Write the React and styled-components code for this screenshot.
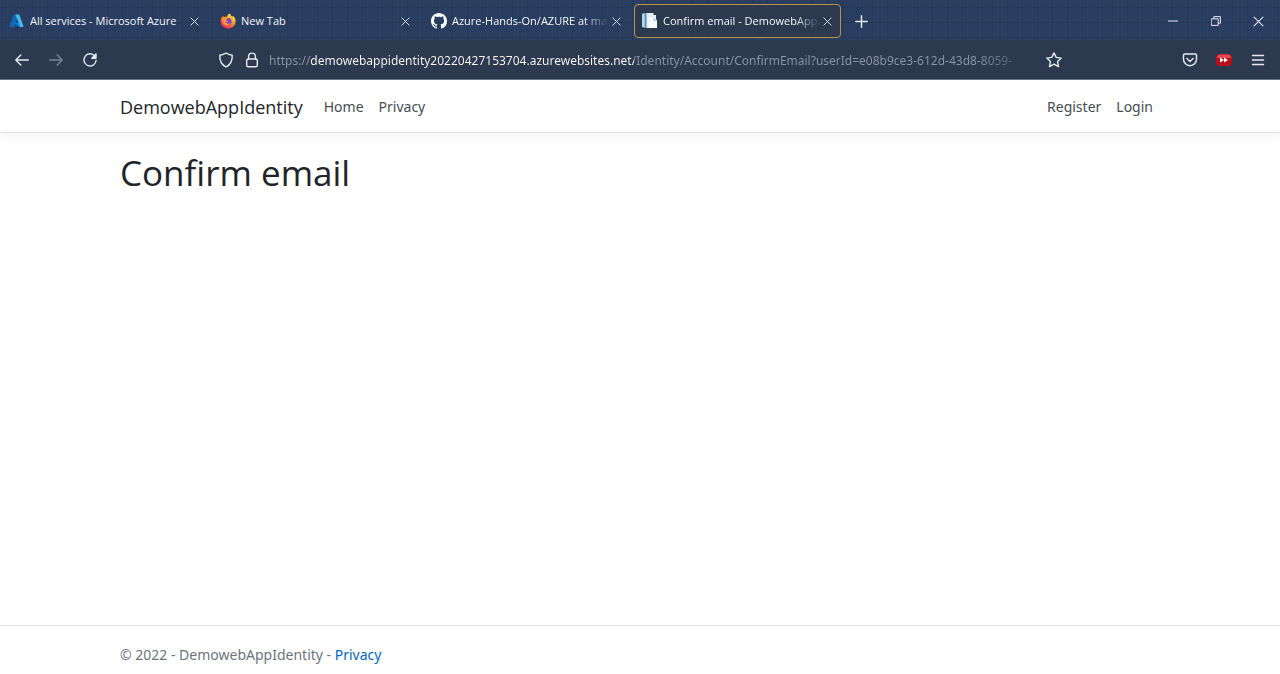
import React from "react";
import styled, { createGlobalStyle, css } from "styled-components";

const GlobalStyle = createGlobalStyle`
  * { box-sizing: border-box; }
  body {
    margin: 0;
    background: #fff;
    color: #212529;
    font-family: "Segoe UI", "Noto Sans", sans-serif;
    font-size: 14px;
  }
  button, input { font: inherit; }
`;

const displayFont = css`
  font-family: "Segoe UI", "Open Sans", sans-serif;
`;

const Shell = styled.div`
  display: flex;
  flex-direction: column;
  min-height: 100vh;
`;

const TabStrip = styled.div`
  display: flex;
  align-items: center;
  height: 40px;
  padding: 2px 0 0 1px;
  color: #f3f6fb;
  background-color: #293e60;
  background-image:
    linear-gradient(90deg, transparent 14px, #253857 14px),
    linear-gradient(transparent 14px, #253857 14px);
  background-size: 15px 15px;
  background-position: 3px 0, 0 8px;
`;

const Tabs = styled.div`
  display: flex;
  flex: 0 1 840px;
  gap: 4px;
  min-width: 0;
`;

const Tab = styled.div`
  display: flex;
  align-items: center;
  flex: 1 1 0;
  min-width: 0;
  height: 34px;
  padding: 0 7px;
  gap: 2px;
  border: 1px solid transparent;
  border-radius: 4px;
  ${(p) => p.$active && css`
    background: #2d394f;
    border-color: #b9954a;
  `}
  > svg { flex: none; margin-right: 3px; }
`;

const TabTitle = styled.span`
  ${displayFont}
  flex: 1;
  min-width: 0;
  overflow: hidden;
  white-space: nowrap;
  font-size: 11px;
  line-height: 18px;
  ${(p) => p.$fade && css`
    mask-image: linear-gradient(90deg, #000 calc(100% - 24px), transparent);
  `}
`;

const IconButton = styled.button`
  display: grid;
  place-items: center;
  flex: none;
  width: ${(p) => p.$w || 34}px;
  height: ${(p) => p.$h || 32}px;
  padding: 0;
  border: 0;
  background: none;
  color: ${(p) => (p.$dim ? "#7b8596" : "#e6eaf1")};
`;

const WindowControls = styled.div`
  display: flex;
  margin-left: auto;
`;

const Toolbar = styled.div`
  display: flex;
  align-items: center;
  justify-content: space-between;
  height: 40px;
  padding: 1px 5px 0;
  background: #2d394f;
  border-bottom: 1px solid #69758a;
`;

const ToolGroup = styled.div`
  display: flex;
  align-items: center;
`;

const AddressBar = styled.div`
  display: flex;
  align-items: center;
  flex: 0 1 856px;
  min-width: 0;
  margin-left: 2px;
`;

const Address = styled.input`
  flex: 1;
  min-width: 0;
  height: 30px;
  padding: 0;
  margin: 0 2px 0 4px;
  border: 0;
  outline: 0;
  font-size: 12px;
  color: transparent;
  background: linear-gradient(90deg, #8c96a6 41px, #fbfbfe 41px, #fbfbfe 365px, #8c96a6 365px, #8c96a6 calc(100% - 60px), transparent);
  background-clip: text;
  -webkit-background-clip: text;
`;

const Container = styled.div`
  display: flex;
  align-items: center;
  width: 100%;
  max-width: 1070px;
  margin: 0 auto;
  padding: 0 15px;
`;

const Header = styled.header`
  display: flex;
  height: 53px;
  padding-top: 2px;
  border-bottom: 1px solid #dee2e6;
  box-shadow: 0 4px 12px rgba(0, 0, 0, 0.05);
`;

const Brand = styled.a`
  ${displayFont}
  margin-right: 14px;
  font-size: 18px;
  line-height: 28px;
  color: #212529;
  text-decoration: none;
`;

const Nav = styled.nav`
  display: flex;
  gap: 1px;
  ${(p) => p.$end && css`margin-left: auto;`}
`;

const NavLink = styled.a`
  padding: 8px 7px;
  line-height: 22px;
  color: #474d52;
  text-decoration: none;
`;

const Main = styled.main`
  flex: 1;
  padding: 15px 0;
`;

const Title = styled.h1`
  ${displayFont}
  margin: 0;
  font-size: 35px;
  line-height: 50px;
  font-weight: 400;
`;

const Footer = styled.footer`
  border-top: 1px solid #dee2e6;
  padding: 18px 0 8px;
  line-height: 22px;
  color: #6c757d;
`;

const FooterLink = styled.a`
  color: #0366bf;
  text-decoration: none;
`;

const Stroke = ({ size = 16, w = 1.4, children }) => (
  <svg width={size} height={size} viewBox="0 0 16 16" fill="none" stroke="currentColor" strokeWidth={w} strokeLinecap="round" strokeLinejoin="round" aria-hidden="true">
    {children}
  </svg>
);

const AzureIcon = () => (
  <svg width="16" height="16" viewBox="0 0 16 16" aria-hidden="true">
    <path d="M5.4 1.5h4.1L5.3 14H1.4c-.8 0-1.1-.5-.9-1.1L4.5 2.200c.1-.4.5-.7.9-.7z" fill="#1268b4" />
    <path d="M5.8 9.400h6l1.500 4.600H10L4.700 10.200c-.4-.4-.2-.8.3-.8z" fill="#0878d2" />
    <path d="M6.300 1.500h3.300c.4 0 .7.300.8.600l4 10.700c.2.700-.2 1.200-.8 1.200h-3.400c.6 0 .9-.5.7-1.100z" fill="#43b9ee" />
  </svg>
);

const FirefoxIcon = () => (
  <svg width="16" height="16" viewBox="0 0 16 16" aria-hidden="true">
    <defs>
      <linearGradient id="fox" x1="0.85" y1="0.05" x2="0.25" y2="1">
        <stop offset="0" stopColor="#fff04a" />
        <stop offset="0.4" stopColor="#ffa02c" />
        <stop offset="0.75" stopColor="#fb4a47" />
        <stop offset="1" stopColor="#e3257c" />
      </linearGradient>
    </defs>
    <path d="M9.600.500c.9.900 1.200 1.800 1.800 2.700 1-.1 1.400.3 1.700.8-.1-.7-.3-1.200-.5-1.500 2 1.300 3 3.500 3 6a7.500 7.200 0 0 1-15 0c0-2.100.700-3.900 1.700-5.200l.3 1.300 1.100-1.700.4 1.200c.9-.4 1.700-.4 2.600 0 .6-1.700 1.400-2.900 2.900-3.600z" fill="url(#fox)" />
    <circle cx="8" cy="8.400" r="3.500" fill="#7542c9" />
    <path d="M2.600 5.500c1.900-1 3.900-.8 5.500.6-1 .1-1.600.5-1.800 1-.3.900.8 1.100 1.700.8-.3 1.500-1.700 1.700-2.600 1.200.8 2 3.600 2.300 5 .5-.7 3-3.800 3.600-5.900 2.100-1.900-1.300-2.700-3.700-1.900-6.200z" fill="#ff962d" />
  </svg>
);

const GithubIcon = () => (
  <svg width="16" height="16" viewBox="0 0 16 16" fill="#fff" aria-hidden="true">
    <path d="M8 0C3.580 0 0 3.580 0 8c0 3.540 2.290 6.530 5.470 7.590.4.070.55-.17.55-.38 0-.19-.01-.82-.01-1.490-2.010.37-2.530-.49-2.690-.94-.09-.23-.48-.94-.82-1.130-.28-.15-.68-.52-.01-.53.63-.01 1.080.58 1.230.82.72 1.210 1.870.87 2.330.66.07-.52.28-.87.51-1.070-1.780-.2-3.640-.89-3.640-3.950 0-.87.31-1.590.82-2.150-.08-.2-.36-1.020.08-2.120 0 0 .67-.21 2.200.82.640-.18 1.320-.27 2-.27s1.360.09 2 .27c1.530-1.040 2.200-.82 2.200-.82.440 1.100.160 1.920.080 2.120.510.560.820 1.270.820 2.150 0 3.070-1.870 3.750-3.650 3.950.290.250.540.730.540 1.480 0 1.070-.010 1.930-.010 2.200 0 .210.150.460.550.380A8.010 8.010 0 0 0 16 8c0-4.420-3.580-8-8-8z" />
  </svg>
);

const ServerIcon = () => (
  <svg width="16" height="16" viewBox="0 0 16 16" aria-hidden="true">
    <path d="M0 .8 4.500 0v15L0 14z" fill="#b7d9ee" />
    <path d="M2.700.4 5 0v15l-2.300-.5z" fill="#4f91b8" />
    <path d="M4.500 0h7v2H14v13H4.500z" fill="#e2edf4" />
    <path d="M6.500 4.500h5L15 7v8H6.500z" fill="#f7fafc" />
    <path d="M11.500 4.500V8H15z" fill="#b7ccd9" />
  </svg>
);

const Cross = ({ size = 9, w = 1.600 }) => (
  <Stroke size={size} w={w}><path d="m1.500 1.500 13 13m0-13-13 13" /></Stroke>
);

const tabs = [
  { title: "All services - Microsoft Azure", icon: <AzureIcon /> },
  { title: "New Tab", icon: <FirefoxIcon /> },
  { title: "Azure-Hands-On/AZURE at main", icon: <GithubIcon />, fade: true },
  { title: "Confirm email - DemowebAppIdentity", icon: <ServerIcon />, fade: true, active: true },
];

const url =
  "https://demowebappidentity20220427153704.azurewebsites.net/Identity/Account/ConfirmEmail?userId=e08b9ce3-612d-43d8-8059-";

export default function App() {
  return (
    <Shell>
      <GlobalStyle />
      <TabStrip>
        <Tabs>
          {tabs.map((t) => (
            <Tab key={t.title} $active={t.active}>
              {t.icon}
              <TabTitle $fade={t.fade}>{t.title}</TabTitle>
              <IconButton $w={12} $h={20} aria-label={`Close ${t.title}`}><Cross /></IconButton>
            </Tab>
          ))}
        </Tabs>
        <IconButton $w={40} aria-label="New tab">
          <Stroke size={13} w={1.800}><path d="M8 1v14M1 8h14" /></Stroke>
        </IconButton>
        <WindowControls>
          <IconButton $w={43} aria-label="Minimize">
            <Stroke size={10} w={1.600}><path d="M0 8h16" /></Stroke>
          </IconButton>
          <IconButton $w={43} aria-label="Restore">
            <Stroke size={10} w={1.600}><path d="M1 4.500h10.500V15H1zM4.500 4V1H15v10.500h-3" /></Stroke>
          </IconButton>
          <IconButton $w={43} aria-label="Close window"><Cross size={11} w={1.500} /></IconButton>
        </WindowControls>
      </TabStrip>

      <Toolbar>
        <ToolGroup>
          <IconButton aria-label="Back">
            <Stroke><path d="M14.300 8H1.800m5-5-5 5 5 5" /></Stroke>
          </IconButton>
          <IconButton $dim aria-label="Forward">
            <Stroke><path d="M1.700 8h12.500m-5-5 5 5-5 5" /></Stroke>
          </IconButton>
          <IconButton aria-label="Reload">
            <Stroke>
              <path d="M12.800 4.100A6.100 6.100 0 1 0 14.100 8.500" />
              <path d="M14 2v4.200H9.800z" fill="currentColor" />
            </Stroke>
          </IconButton>
        </ToolGroup>
        <AddressBar>
          <IconButton $w={26} aria-label="Tracking protection">
            <Stroke><path d="M8 1c1.800 1.300 3.600 1.900 6.200 2.200.3 5.300-1.500 9.300-6.200 11.800C3.300 12.500 1.500 8.500 1.800 3.200 4.400 2.900 6.200 2.300 8 1z" /></Stroke>
          </IconButton>
          <IconButton $w={26} aria-label="Site information">
            <Stroke><rect x="2.700" y="7" width="10.600" height="7.700" rx="1.500" /><path d="M4.600 7V4.500a3.400 3.400 0 0 1 6.800 0V7" /></Stroke>
          </IconButton>
          <Address aria-label="Address" defaultValue={url} spellCheck={false} />
          <IconButton $w={30} aria-label="Bookmark this page">
            <Stroke><path d="m8 .9 2.200 4.500 5 .7-3.600 3.500.9 5L8 12.200l-4.500 2.400.9-5L.8 6.100l5-.7z" /></Stroke>
          </IconButton>
        </AddressBar>
        <ToolGroup>
          <IconButton aria-label="Save to Pocket">
            <Stroke><path d="M2.700 2h10.600c.7 0 1.200.5 1.200 1.200v4a6.500 6.500 0 0 1-13 0v-4C1.500 2.500 2 2 2.700 2z" /><path d="m4.900 6.500 3.100 3 3.100-3" /></Stroke>
          </IconButton>
          <IconButton aria-label="Video extension">
            <svg width="16" height="16" viewBox="0 0 16 16" aria-hidden="true">
              <rect x="0" y="2" width="16" height="12" rx="4" fill="#b80f1b" />
              <path d="M1 6q0-3.500 3.500-3.500h7Q15 2.500 15 6z" fill="#e04a50" />
              <path d="m4 5.500 4 2.500-4 2.500zm4 0L12 8l-4 2.500z" fill="#fff" />
            </svg>
          </IconButton>
          <IconButton aria-label="Open menu">
            <Stroke size={16}><path d="M2.500 3.500h11M2.500 8h11M2.500 12.500h11" /></Stroke>
          </IconButton>
        </ToolGroup>
      </Toolbar>

      <Header>
        <Container>
          <Brand href="#">DemowebAppIdentity</Brand>
          <Nav aria-label="Main">
            <NavLink href="#">Home</NavLink>
            <NavLink href="#">Privacy</NavLink>
          </Nav>
          <Nav $end aria-label="Account">
            <NavLink href="#">Register</NavLink>
            <NavLink href="#">Login</NavLink>
          </Nav>
        </Container>
      </Header>

      <Main>
        <Container>
          <Title>Confirm email</Title>
        </Container>
      </Main>

      <Footer>
        <Container>
          <span>© 2022 - DemowebAppIdentity - <FooterLink href="#">Privacy</FooterLink></span>
        </Container>
      </Footer>
    </Shell>
  );
}
